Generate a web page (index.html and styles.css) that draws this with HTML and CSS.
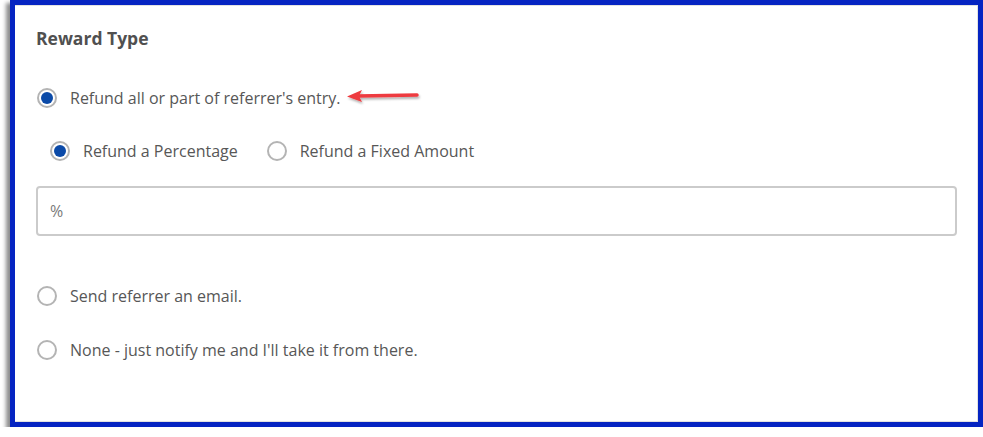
FILE: index.html
```html
<!DOCTYPE html>
<html lang="en">
<head>
    <meta charset="UTF-8">
    <meta name="viewport" content="width=device-width, initial-scale=1.0">
    <title>Reward Type</title>
    <link rel="stylesheet" href="styles.css">
</head>
<body>
    <div class="frame">
        <div class="panel">
            <h3 class="panel-title">Reward Type</h3>

            <label class="option option--top">
                <span class="radio radio--checked"></span>
                <span class="option-text">Refund all or part of referrer's entry.</span>
                <svg class="pointer" width="76" height="18" viewBox="0 0 76 18">
                    <defs>
                        <filter id="soft" x="-10%" y="-40%" width="130%" height="200%">
                            <feDropShadow dx="1" dy="2" stdDeviation="1.2" flood-color="#000" flood-opacity="0.3"/>
                        </filter>
                    </defs>
                    <g filter="url(#soft)">
                        <line x1="12" y1="8" x2="71" y2="7" stroke="#ee3b3f" stroke-width="3.5" stroke-linecap="round"/>
                        <polygon points="1,8.5 16,2 13,8 16,14" fill="#ee3b3f"/>
                    </g>
                </svg>
            </label>

            <div class="sub-options">
                <label class="option">
                    <span class="radio radio--checked"></span>
                    <span class="option-text">Refund a Percentage</span>
                </label>
                <label class="option">
                    <span class="radio"></span>
                    <span class="option-text">Refund a Fixed Amount</span>
                </label>
            </div>

            <div class="amount-field">%</div>

            <label class="option option--spaced">
                <span class="radio"></span>
                <span class="option-text">Send referrer an email.</span>
            </label>

            <label class="option option--last">
                <span class="radio"></span>
                <span class="option-text">None - just notify me and I'll take it from there.</span>
            </label>
        </div>
    </div>
</body>
</html>
```

FILE: styles.css
```css
body {
    margin: 0;
    background: #ffffff;
    font-family: 'Open Sans', sans-serif;
    color: #575757;
}

.frame {
    margin-left: 10px;
    width: 973px;
    height: 427px;
    box-sizing: border-box;
    border: 5px solid #0524c2;
    box-shadow: -4px 3px 4px rgba(0, 0, 0, 0.45);
}

.panel {
    height: 100%;
    box-sizing: border-box;
    padding: 21px 20px 0 21px;
    border: 1px solid #e2e2e2;
    border-left: none;
}

.panel-title {
    margin: 0;
    font-family: 'Open Sans', sans-serif;
    font-size: 17.5px;
    font-weight: 700;
    line-height: 22px;
    color: #505050;
}

.option {
    display: flex;
    align-items: center;
    font-size: 16px;
    line-height: 22px;
}

.option--top {
    margin-top: 38px;
}

.option--spaced {
    margin-top: 49px;
}

.option--last {
    margin-top: 32px;
}

.radio {
    width: 20px;
    height: 20px;
    box-sizing: border-box;
    border: 2px solid #b4b4b4;
    border-radius: 50%;
    margin-left: 1px;
    margin-right: 13px;
    display: flex;
    align-items: center;
    justify-content: center;
    flex-shrink: 0;
}

.radio--checked::after {
    content: '';
    width: 12px;
    height: 12px;
    border-radius: 50%;
    background: #0b4aa8;
}

.pointer {
    margin-left: 5px;
    margin-top: -2px;
}

.sub-options {
    display: flex;
    gap: 28px;
    margin-top: 31px;
    padding-left: 13px;
}

.amount-field {
    margin-top: 24px;
    height: 50px;
    box-sizing: border-box;
    border: 2px solid #cbcbcb;
    border-radius: 4px;
    padding: 0 12px;
    display: flex;
    align-items: center;
    font-size: 16px;
    color: #7a7a7a;
}
```
